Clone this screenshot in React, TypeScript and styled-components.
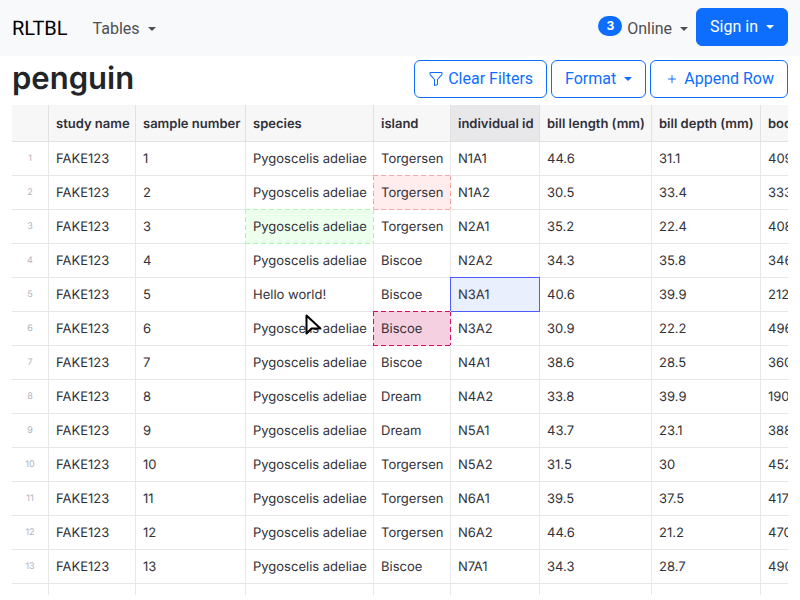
import React from "react";
import styled, { createGlobalStyle, css } from "styled-components";

const GlobalStyle = createGlobalStyle`
  *, *::before, *::after { box-sizing: border-box; }
  body {
    margin: 0;
    background: #fff;
    color: #212529;
    font-family: Roboto, "Liberation Sans", sans-serif;
    font-size: 16px;
    line-height: 24px;
    text-rendering: geometricPrecision;
  }
`;

const Page = styled.div`
  height: 100vh;
  display: flex;
  flex-direction: column;
  overflow: hidden;
  padding-bottom: 5px;
`;

const Navbar = styled.nav`
  flex: none;
  display: flex;
  align-items: center;
  height: 56px;
  padding: 0 12px 2px;
  background: #f8f9fb;
`;

const Brand = styled.a`
  margin-right: 25px;
  padding-top: 2px;
  color: #000;
  font-size: 20px;
  line-height: 30px;
  text-decoration: none;
`;

const Caret = styled.span`
  display: inline-block;
  margin-left: 8px;
  border: 4px solid transparent;
  border-top-color: currentColor;
  border-bottom: 0;
`;

const NavButton = styled.button`
  display: flex;
  align-items: center;
  padding: 12px 0 8px;
  border: 0;
  background: none;
  color: #4e4f50;
  font: inherit;
`;

const NavEnd = styled.div`
  display: flex;
  align-items: center;
  gap: 8px;
  margin-left: auto;
`;

const Badge = styled.span`
  margin: 0 5px 6px 0;
  padding: 0 8px;
  border-radius: 10px;
  background: #0d6efd;
  color: #fff;
  font-family: Inter, sans-serif;
  font-size: 12px;
  font-weight: 700;
  line-height: 20px;
`;

const Button = styled.button<{ $solid?: boolean }>`
  display: flex;
  align-items: center;
  height: 38px;
  padding: 0 13px;
  border: 1px solid #0d6efd;
  border-radius: 6px;
  background: ${(p) => (p.$solid ? "#0d6efd" : "#fff")};
  color: ${(p) => (p.$solid ? "#fff" : "#0d6efd")};
  font: inherit;
  white-space: nowrap;
`;

const TitleBar = styled.header`
  flex: none;
  display: flex;
  align-items: center;
  justify-content: space-between;
  height: 49px;
  padding: 0 12px 3px;
`;

const Title = styled.h1`
  margin: 0;
  font-family: Inter, sans-serif;
  font-size: 31px;
  font-weight: 600;
  line-height: 38px;
`;

const Actions = styled.div`
  display: flex;
  gap: 4px;
`;

const ButtonIcon = styled.svg`
  width: 16px;
  height: 16px;
  margin-right: 4px;
`;

const GridFrame = styled.main`
  flex: 1;
  min-height: 0;
  margin: 0 12px;
  overflow: hidden;
`;

const Grid = styled.table`
  width: 898px;
  table-layout: fixed;
  border-collapse: separate;
  border-spacing: 0;
  color: #313139;
  font-family: Inter, sans-serif;
  font-size: 13px;
  line-height: 20px;
`;

const Column = styled.col<{ $width: number }>`
  width: ${(p) => p.$width}px;
`;

const HeadCell = styled.th<{ $active?: boolean }>`
  height: 37px;
  padding: 2px 0 0 7px;
  border-right: 1px solid #e1e1e1;
  border-bottom: 1px solid #e1e1e1;
  background: ${(p) => (p.$active ? "#e8e8ea" : "#f7f7f8")};
  font-weight: 600;
  text-align: left;
  white-space: nowrap;
`;

type Mark = "rose" | "green" | "blue" | "magenta";

const marks: Record<Mark, { fill: string; line: string; dashed: boolean }> = {
  rose: { fill: "#ffeded", line: "#f7a9a9", dashed: true },
  green: { fill: "#edffed", line: "#a9f7a9", dashed: true },
  blue: { fill: "#eaeffe", line: "#4f5dff", dashed: false },
  magenta: { fill: "#f5d0e1", line: "#cc1166", dashed: true },
};

const dashes = (angle: string, line: string, fill: string) =>
  `repeating-linear-gradient(${angle}, ${line} 0 5px, ${fill} 5px 8px)`;

const dashedFrame = (line: string, fill: string) => css`
  background:
    ${dashes("to right", line, fill)} top / 100% 1px no-repeat,
    ${dashes("to right", line, fill)} bottom / 100% 1px no-repeat,
    ${dashes("to bottom", line, fill)} left / 1px 100% no-repeat,
    ${dashes("to bottom", line, fill)} right / 1px 100% no-repeat;
`;

const Cell = styled.td<{ $mark?: Mark }>`
  height: 34px;
  padding: 0 0 0 7px;
  border-right: 1px solid #e7e7e8;
  border-bottom: 1px solid #e7e7e8;
  white-space: nowrap;
  ${({ $mark }) =>
    $mark &&
    css`
      position: relative;
      background: ${marks[$mark].fill};
      &::after {
        content: "";
        position: absolute;
        inset: -1px;
        ${marks[$mark].dashed
          ? dashedFrame(marks[$mark].line, marks[$mark].fill)
          : css`
              border: 1px solid ${marks[$mark].line};
            `}
      }
    `}
`;

const RowNumber = styled(Cell)`
  padding: 0;
  color: #b2b2c0;
  font-size: 9px;
  text-align: center;
`;

const Pointer = styled.svg`
  position: absolute;
  left: 303px;
  top: 312px;
  width: 22px;
  height: 26px;
  pointer-events: none;
`;

const columns = [
  { name: "study name", width: 87 },
  { name: "sample number", width: 110 },
  { name: "species", width: 128 },
  { name: "island", width: 77 },
  { name: "individual id", width: 89 },
  { name: "bill length (mm)", width: 112 },
  { name: "bill depth (mm)", width: 109 },
  { name: "body mass (g)", width: 149 },
];

const PYGO = "Pygoscelis adeliae";

const rows = [
  [PYGO, "Torgersen", "N1A1", "44.6", "31.1", "4090"],
  [PYGO, "Torgersen", "N1A2", "30.5", "33.4", "3330"],
  [PYGO, "Torgersen", "N2A1", "35.2", "22.4", "4080"],
  [PYGO, "Biscoe", "N2A2", "34.3", "35.8", "3460"],
  ["Hello world!", "Biscoe", "N3A1", "40.6", "39.9", "2120"],
  [PYGO, "Biscoe", "N3A2", "30.9", "22.2", "4960"],
  [PYGO, "Biscoe", "N4A1", "38.6", "28.5", "3600"],
  [PYGO, "Dream", "N4A2", "33.8", "39.9", "1900"],
  [PYGO, "Dream", "N5A1", "43.7", "23.1", "3880"],
  [PYGO, "Torgersen", "N5A2", "31.5", "30", "4520"],
  [PYGO, "Torgersen", "N6A1", "39.5", "37.5", "4170"],
  [PYGO, "Torgersen", "N6A2", "44.6", "21.2", "4700"],
  [PYGO, "Biscoe", "N7A1", "34.3", "28.7", "4900"],
];

const markedCells: Record<string, Mark> = {
  "2:island": "rose",
  "3:species": "green",
  "5:individual id": "blue",
  "6:island": "magenta",
};

export default function App() {
  return (
    <Page>
      <GlobalStyle />
      <Navbar>
        <Brand href="#">RLTBL</Brand>
        <NavButton type="button">
          Tables
          <Caret />
        </NavButton>
        <NavEnd>
          <NavButton type="button">
            <Badge>3</Badge>
            Online
            <Caret />
          </NavButton>
          <Button type="button" $solid>
            Sign in
            <Caret />
          </Button>
        </NavEnd>
      </Navbar>
      <TitleBar>
        <Title>penguin</Title>
        <Actions>
          <Button type="button">
            <ButtonIcon viewBox="0 0 16 16" fill="currentColor" aria-hidden="true">
              <path d="M1.5 1.5A.5.5 0 0 1 2 1h12a.5.5 0 0 1 .5.5v2a.5.5 0 0 1-.128.334L10 8.692V13.5a.5.5 0 0 1-.342.474l-3 1A.5.5 0 0 1 6 14.5V8.692L1.628 3.834A.5.5 0 0 1 1.5 3.5zm1 .5v1.308l4.372 4.858A.5.5 0 0 1 7 8.5v5.306l2-.666V8.5a.5.5 0 0 1 .128-.334L13.5 3.308V2z" />
            </ButtonIcon>
            Clear Filters
          </Button>
          <Button type="button">
            Format
            <Caret />
          </Button>
          <Button type="button">
            <ButtonIcon viewBox="0 0 16 16" fill="currentColor" aria-hidden="true">
              <path d="M8 4a.5.5 0 0 1 .5.5v3h3a.5.5 0 0 1 0 1h-3v3a.5.5 0 0 1-1 0v-3h-3a.5.5 0 0 1 0-1h3v-3A.5.5 0 0 1 8 4" />
            </ButtonIcon>
            Append Row
          </Button>
        </Actions>
      </TitleBar>
      <GridFrame>
        <Grid>
          <colgroup>
            <Column $width={37} />
            {columns.map((c) => (
              <Column key={c.name} $width={c.width} />
            ))}
          </colgroup>
          <thead>
            <tr>
              <HeadCell aria-label="Row" />
              {columns.map((c) => (
                <HeadCell key={c.name} scope="col" $active={c.name === "individual id"}>
                  {c.name}
                </HeadCell>
              ))}
            </tr>
          </thead>
          <tbody>
            {rows.map((row, i) => (
              <tr key={i}>
                <RowNumber>{i + 1}</RowNumber>
                {["FAKE123", String(i + 1), ...row].map((value, j) => (
                  <Cell key={j} $mark={markedCells[`${i + 1}:${columns[j].name}`]}>
                    {value}
                  </Cell>
                ))}
              </tr>
            ))}
            <tr>
              <RowNumber />
              {columns.map((c) => (
                <Cell key={c.name} />
              ))}
            </tr>
          </tbody>
        </Grid>
      </GridFrame>
      <Pointer viewBox="0 0 22 26" aria-hidden="true">
        <path
          d="M3.5 3.5V21.5L8.5 16.5H17.5Z"
          fill="#fff"
          stroke="#000"
          strokeWidth="2"
          strokeLinejoin="round"
        />
      </Pointer>
    </Page>
  );
}
